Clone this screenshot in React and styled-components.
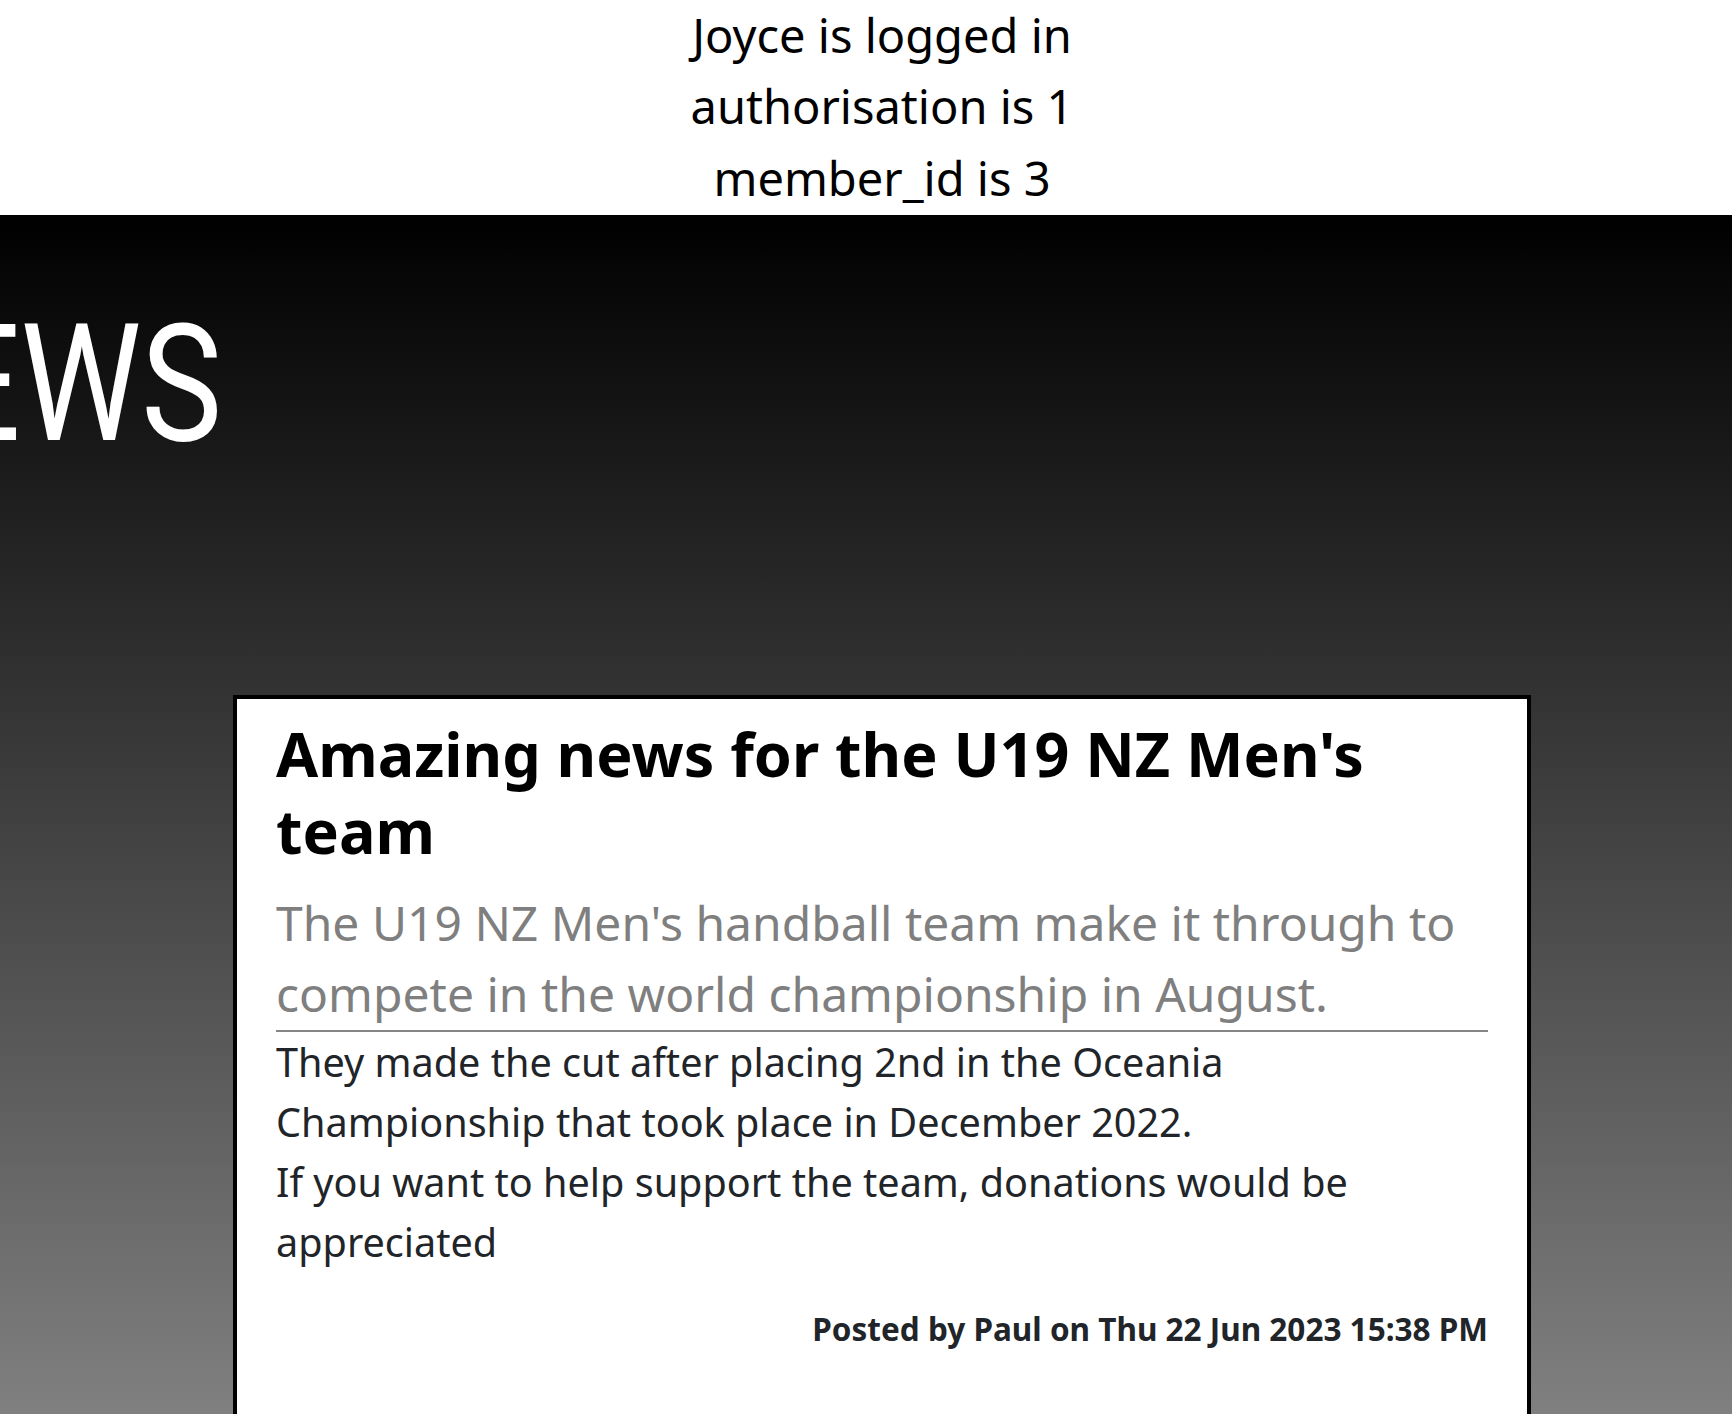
import styled, { createGlobalStyle } from 'styled-components'

const GlobalStyle = createGlobalStyle`
	body {
		margin: 0;
		font-family: 'Noto Sans', 'Open Sans', sans-serif;
		background: #fff;
		overflow: hidden;
	}
`

const Page = styled.div`
	padding-left: 32px;
	min-height: 100vh;
	background: #fff;
`

const StatusBar = styled.div`
	padding-bottom: 1px;
	text-align: center;
	font-size: 47px;
	line-height: 71.4px;
	color: #000;
`

const Hero = styled.section`
	margin-left: -32px;
	padding: 1px 0 0 32px;
	min-height: calc(100vh - 215px);
	background: linear-gradient(#000 0, #808080 1199px);
`

const TitleBox = styled.div`
	display: flex;
	justify-content: flex-end;
	width: 190px;
	margin-top: 72px;
`

const HeroTitle = styled.h1`
	margin: 0;
	font-family: Roboto, 'Liberation Sans', sans-serif;
	font-weight: 400;
	font-size: 164px;
	line-height: 193px;
	color: #fff;
	white-space: nowrap;
	transform: scaleX(0.83);
	transform-origin: right center;
`

const Card = styled.article`
	box-sizing: border-box;
	width: 1298px;
	margin: 214px auto 0;
	padding: 16px 39px 120px 39px;
	background: #fff;
	border: 4px solid #000;
`

const CardTitle = styled.h2`
	margin: 0 0 18px;
	font-size: 61px;
	line-height: 77px;
	font-weight: 700;
	color: #000;
`

const Lead = styled.p`
	margin: 0;
	padding-bottom: 1px;
	font-size: 48px;
	line-height: 71px;
	color: #7f7f7f;
	border-bottom: 2px solid #858585;
`

const Body = styled.div`
	font-size: 39.6px;
	line-height: 60px;
	color: #212529;
`

const Meta = styled.p`
	margin: 34px 0 0;
	text-align: right;
	font-size: 31.5px;
	line-height: 45px;
	font-weight: 700;
	color: #212529;
`

export default function App() {
	return (
		<>
			<GlobalStyle />
			<Page>
				<StatusBar>
					<div>Joyce is logged in</div>
					<div>authorisation is 1</div>
					<div>member_id is 3</div>
				</StatusBar>
				<Hero>
					<TitleBox>
						<HeroTitle>NEWS</HeroTitle>
					</TitleBox>
					<Card>
						<CardTitle>Amazing news for the U19 NZ Men's team</CardTitle>
						<Lead>The U19 NZ Men's handball team make it through to compete in the world championship in August.</Lead>
						<Body>
							They made the cut after placing 2nd in the Oceania Championship that took place in December 2022.
							<br />
							If you want to help support the team, donations would be appreciated
						</Body>
						<Meta>Posted by Paul on Thu 22 Jun 2023 15:38 PM</Meta>
					</Card>
				</Hero>
			</Page>
		</>
	)
}
